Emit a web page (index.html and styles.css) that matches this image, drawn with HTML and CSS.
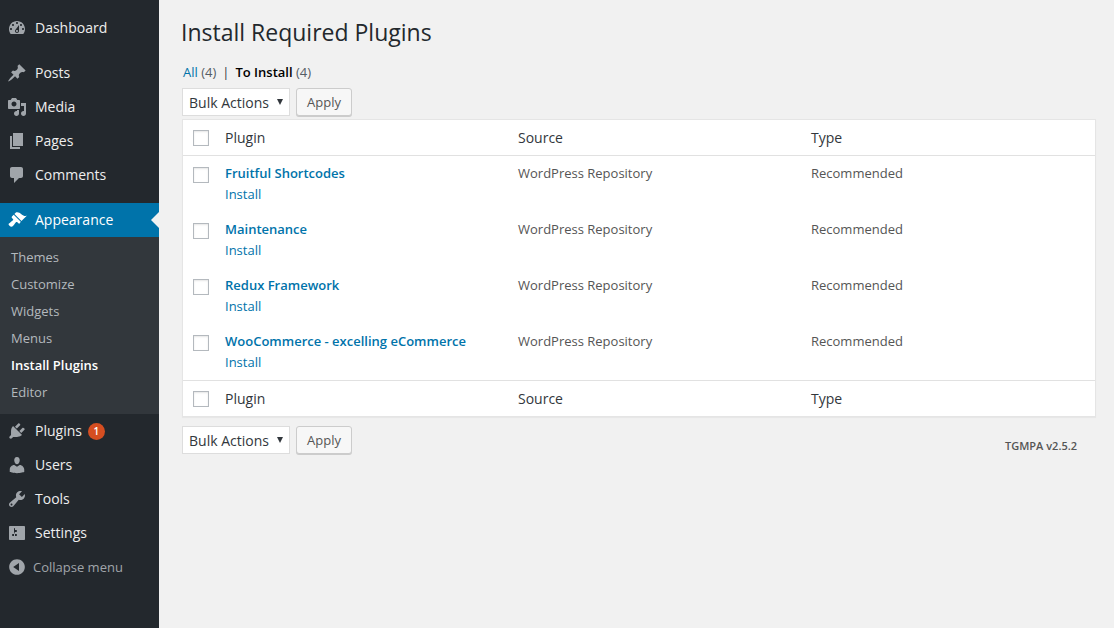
FILE: index.html
```html
<!DOCTYPE html>
<html lang="en">
<head>
<meta charset="utf-8">
<title>Install Required Plugins</title>
<link rel="stylesheet" href="styles.css">
</head>
<body>
<div class="shell">
<nav class="side">
  <a class="item first"><svg class="ic" viewBox="0 0 20 20"><path d="M3.76 16h12.48c1.1-1.37 1.76-3.11 1.76-5 0-4.42-3.58-8-8-8s-8 3.58-8 8c0 1.89.66 3.63 1.76 5zM10 4c.55 0 1 .45 1 1s-.45 1-1 1-1-.45-1-1 .45-1 1-1zM6 6c.55 0 1 .45 1 1s-.45 1-1 1-1-.45-1-1 .45-1 1-1zm8 0c.55 0 1 .45 1 1s-.45 1-1 1-1-.45-1-1 .45-1 1-1zm-5.37 5.55L12 7v6c0 1.1-.9 2-2 2s-2-.9-2-2c0-.57.24-1.08.63-1.45zM4 10c.55 0 1 .45 1 1s-.45 1-1 1-1-.45-1-1 .45-1 1-1zm12 0c.55 0 1 .45 1 1s-.45 1-1 1-1-.45-1-1 .45-1 1-1zm-5 3c0-.55-.45-1-1-1s-1 .45-1 1 .45 1 1 1 1-.45 1-1z"/></svg><span>Dashboard</span></a>
  <a class="item gap"><svg class="ic" viewBox="0 0 20 20"><path d="M10.44 3.02l1.82-1.82 6.36 6.35-1.83 1.82c-1.05-.68-2.48-.57-3.41.36l-.75.75c-.92.93-1.04 2.35-.35 3.41l-1.83 1.82-2.41-2.41-2.8 2.79c-.42.42-3.38 2.71-3.8 2.29s1.86-3.39 2.28-3.81l2.79-2.79L4.1 9.36l1.83-1.82c1.05.69 2.48.57 3.4-.36l.75-.75c.93-.92 1.05-2.35.36-3.41z"/></svg><span>Posts</span></a>
  <a class="item"><svg class="ic" viewBox="0 0 20 20"><path d="M13 11V4c0-.55-.45-1-1-1h-1.67L9 1H5L3.67 3H2c-.55 0-1 .45-1 1v7c0 .55.45 1 1 1h10c.55 0 1-.45 1-1zM7 4.5c1.38 0 2.5 1.12 2.5 2.5S8.38 9.5 7 9.5 4.5 8.38 4.5 7 5.62 4.5 7 4.5zM14 6h5v10.5c0 1.38-1.12 2.5-2.5 2.5S14 17.88 14 16.5s1.12-2.5 2.5-2.5c.17 0 .34.02.5.05V9h-3V6zm-4 8.05V13h2v3.5c0 1.38-1.12 2.5-2.5 2.5S7 17.88 7 16.5 8.12 14 9.5 14c.17 0 .34.02.5.05z"/></svg><span>Media</span></a>
  <a class="item"><svg class="ic" viewBox="0 0 20 20"><path d="M6 15V2h10v13H6zm-1 1h8v2H3V5h2v11z"/></svg><span>Pages</span></a>
  <a class="item"><svg class="ic" viewBox="0 0 20 20"><path d="M5 2h9c1.1 0 2 .9 2 2v7c0 1.1-.9 2-2 2h-2l-5 5v-5H5c-1.1 0-2-.9-2-2V4c0-1.1.9-2 2-2z"/></svg><span>Comments</span></a>
  <a class="item gap active"><svg class="ic" viewBox="0 0 20 20"><path d="M14.48 11.06L7.41 3.99l1.5-1.5c.5-.56 2.3-.47 3.51.32 1.21.8 1.43 1.28 2.91 2.1 1.18.64 2.45 1.26 4.45.85zm-.71.71L6.7 4.7 4.93 6.47c-.39.39-.39 1.02 0 1.41l1.06 1.06c.39.39.39 1.03 0 1.42-.6.6-1.43 1.11-2.21 1.69-.35.26-.7.53-1.01.84C1.43 13.23.99 14.3 2.5 15.8c1.5 1.5 2.57 1.07 3.9-.27.31-.31.58-.66.84-1.01.58-.78 1.09-1.61 1.69-2.21.39-.39 1.02-.39 1.41 0l1.06 1.06c.39.39 1.02.39 1.41 0z"/></svg><span>Appearance</span></a>
  <div class="sub">
    <a>Themes</a><a>Customize</a><a>Widgets</a><a>Menus</a><a class="cur">Install Plugins</a><a>Editor</a>
  </div>
  <a class="item"><svg class="ic" viewBox="0 0 20 20"><path d="M13.11 4.36L9.87 7.6 8 5.73l3.24-3.24c.35-.34 1.05-.2 1.56.32.52.51.66 1.21.31 1.55zm-8 1.77l.91-1.12 9.01 9.01-1.19.84c-.71.71-2.63 1.16-3.82 1.16H6.14L4.9 17.26c-.59.59-1.54.59-2.12 0-.59-.58-.59-1.53 0-2.12l1.24-1.24v-3.88c0-1.13.4-3.19 1.09-3.89zm7.26 3.97l3.24-3.24c.34-.35 1.04-.21 1.55.31.52.51.66 1.21.31 1.55l-3.24 3.25z"/></svg><span>Plugins</span><b class="badge">1</b></a>
  <a class="item"><svg class="ic" viewBox="0 0 20 20"><path d="M10 9.25c-2.27 0-2.73-3.44-2.73-3.44C7 4.02 7.82 2 9.97 2c2.16 0 2.98 2.02 2.71 3.81 0 0-.41 3.44-2.68 3.44zm0 2.57L12.72 10c2.39 0 4.52 2.33 4.52 4.53v2.49s-3.65 1.13-7.24 1.13c-3.65 0-7.24-1.13-7.24-1.13v-2.49c0-2.25 1.94-4.48 4.47-4.48z"/></svg><span>Users</span></a>
  <a class="item"><svg class="ic" viewBox="0 0 20 20"><path d="M16.68 9.77c-1.34 1.34-3.3 1.67-4.95.99l-5.41 6.52c-.99.99-2.59.99-3.58 0s-.99-2.59 0-3.57l6.52-5.42c-.68-1.65-.35-3.61.99-4.95 1.28-1.28 3.12-1.62 4.72-1.06l-2.89 2.89 2.82 2.82 2.86-2.87c.53 1.58.18 3.39-1.08 4.65zM3.81 16.21c.4.39 1.04.39 1.43 0 .4-.4.4-1.04 0-1.43-.39-.4-1.03-.4-1.43 0-.39.39-.39 1.03 0 1.43z"/></svg><span>Tools</span></a>
  <a class="item"><svg class="ic" viewBox="0 0 20 20"><path d="M18 16V4c0-.55-.45-1-1-1H3c-.55 0-1 .45-1 1v12c0 .55.45 1 1 1h14c.55 0 1-.45 1-1zM8 11h1c.55 0 1 .45 1 1s-.45 1-1 1H8v1.5c0 .28-.22.5-.5.5s-.5-.22-.5-.5V13H6c-.55 0-1-.45-1-1s.45-1 1-1h1V5.5c0-.28.22-.5.5-.5s.5.22.5.5V7h1c.55 0 1 .45 1 1s-.45 1-1 1h-1v5.5c0 .28-.22.5-.5.5s-.5-.22-.5-.5V9z"/></svg><span>Settings</span></a>
  <a class="item collapse"><svg class="ic" viewBox="0 0 20 20"><path d="M10 2.16c4.33 0 7.84 3.51 7.84 7.84s-3.51 7.84-7.84 7.84S2.16 14.33 2.16 10 5.71 2.16 10 2.16zm2 11.72V6.12L6.18 9.97z"/></svg><span>Collapse menu</span></a>
</nav>
<main class="main">
  <h1 class="title">Install Required Plugins</h1>
  <ul class="views">
    <li><a>All</a> <span class="count">(4)</span></li>
    <li class="sep">|</li>
    <li><strong>To Install</strong> <span class="count">(4)</span></li>
  </ul>
  <div class="bar">
    <div class="select"><span>Bulk Actions</span><i class="arrow"></i></div>
    <button class="btn">Apply</button>
  </div>
  <div class="table">
    <div class="row head"><i class="cb"></i><div class="c1">Plugin</div><div class="c2">Source</div><div class="c3">Type</div></div>
    <div class="body">
      <div class="row plugin"><i class="cb"></i><div class="c1"><a class="name">Fruitful Shortcodes</a><a class="act">Install</a></div><div class="c2">WordPress Repository</div><div class="c3">Recommended</div></div>
      <div class="row plugin"><i class="cb"></i><div class="c1"><a class="name">Maintenance</a><a class="act">Install</a></div><div class="c2">WordPress Repository</div><div class="c3">Recommended</div></div>
      <div class="row plugin"><i class="cb"></i><div class="c1"><a class="name">Redux Framework</a><a class="act">Install</a></div><div class="c2">WordPress Repository</div><div class="c3">Recommended</div></div>
      <div class="row plugin"><i class="cb"></i><div class="c1"><a class="name">WooCommerce - excelling eCommerce</a><a class="act">Install</a></div><div class="c2">WordPress Repository</div><div class="c3">Recommended</div></div>
    </div>
    <div class="row head foot"><i class="cb"></i><div class="c1">Plugin</div><div class="c2">Source</div><div class="c3">Type</div></div>
  </div>
  <div class="bar lower">
    <div class="select"><span>Bulk Actions</span><i class="arrow"></i></div>
    <button class="btn">Apply</button>
    <div class="ver">TGMPA v2.5.2</div>
  </div>
</main>
</div>
</body>
</html>
```
FILE: styles.css
```css
* { box-sizing: border-box; }
html, body { margin: 0; height: 100%; overflow: hidden; }
body { background: #f1f1f1; font-family: "Open Sans", sans-serif; font-size: 13px; color: #444; }
.shell { display: flex; height: 628px; }
.side { width: 159px; flex: none; background: #23282d; padding-top: 11px; }
.item { display: flex; align-items: center; height: 34px; position: relative; color: #eee; font-size: 14px; }
.item span { margin-top: -2px; }
.item.gap { margin-top: 11px; }
.ic { width: 20px; height: 20px; flex: none; margin: 0 8px 0 7px; fill: #a0a5aa; }
.active { background: #0073aa; color: #fff; }
.active .ic { fill: #fff; }
.active::after { content: ""; position: absolute; right: 0; top: 50%; margin-top: -8px; border: 8px solid transparent; border-right-color: #f1f1f1; border-left-width: 0; }
.sub { background: #32373c; padding: 7px 0 8px; display: flex; flex-direction: column; }
.sub a { height: 27px; line-height: 27px; padding-left: 11px; color: #b4b9be; font-size: 13px; }
.sub a.cur { color: #fff; font-weight: 600; }
.badge { margin: 0 0 0 6px; width: 17px; height: 17px; border-radius: 50%; background: #d54e21; color: #fff; font-size: 10px; font-weight: 600; line-height: 17px; text-align: center; }
.collapse { color: #a0a5aa; font-size: 13px; }
.collapse span { margin-top: 0; }
.collapse .ic { margin: 0 6px 0 7px; }
.main { flex: 1; min-width: 0; padding: 0 18px 0 23px; }
.title { margin: 0 0 0 -1px; padding-top: 16px; font-size: 23px; line-height: 33px; font-weight: 400; color: #23282d; }
.views { list-style: none; margin: 12px 0 0 1px; padding: 0; display: flex; gap: 5px; height: 22px; line-height: 22px; color: #32373c; font-size: 13px; }
.views a { color: #0073aa; }
.views .count { color: #555d66; }
.views strong { font-weight: 600; color: #000; }
.views .sep { color: #32373c; margin: 0 1px 0 1px; }
.bar { display: flex; align-items: center; gap: 6px; height: 28px; margin-top: 5px; }
.select { width: 108px; height: 28px; background: #fff; border: 1px solid #ddd; display: flex; align-items: center; justify-content: space-between; padding: 0 6px 0 6px; font-size: 14px; color: #32373c; }
.arrow { width: 0; height: 0; border: 3.5px solid transparent; border-top: 6px solid #32373c; border-bottom: 0; }
.btn { width: 56px; height: 28px; padding: 0; background: #f7f7f7; border: 1px solid #ccc; border-radius: 3px; box-shadow: 0 1px 0 #ccc; color: #555; font: 13px "Open Sans", sans-serif; }
.table { margin-top: 3px; width: 914px; height: 298px; background: #fff; border: 1px solid #e5e5e5; box-shadow: 0 1px 1px rgba(0,0,0,.04); display: flex; flex-direction: column; }
.row { display: grid; grid-template-columns: 42px 293px 293px 1fr; }
.head { height: 36px; align-items: center; font-size: 14px; color: #32373c; border-bottom: 1px solid #e1e1e1; }
.foot { border-bottom: 0; border-top: 1px solid #e1e1e1; }
.body { flex: 1; padding-top: 0; }
.plugin { height: 56px; padding-top: 7px; font-size: 13px; line-height: 21px; color: #555; }
.plugin .cb { margin-top: 4px; }
.cb { display: block; width: 16px; height: 16px; margin-left: 10px; background: #fff; border: 1px solid #b4b9be; box-shadow: inset 0 1px 2px rgba(0,0,0,.1); }
.c1 { display: flex; flex-direction: column; }
.name { color: #0073aa; font-weight: 600; }
.act { color: #0073aa; }
.lower { margin-top: 9px; position: relative; }
.ver { margin-left: auto; margin-right: 19px; margin-top: 11px; font-size: 11px; font-weight: 600; color: #555; }
```
